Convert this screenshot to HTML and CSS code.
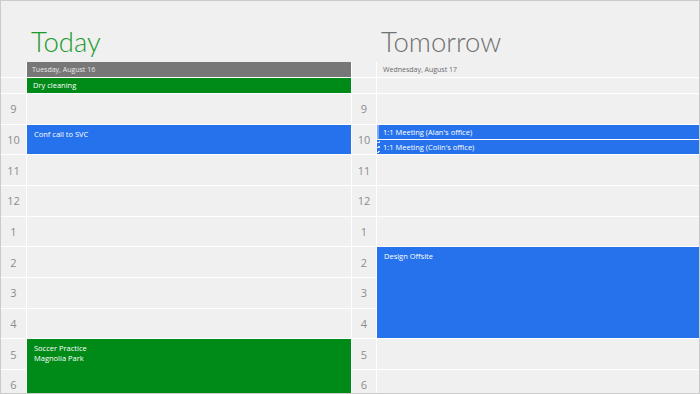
FILE: index.html
```html
<!DOCTYPE html>
<html>
<head>
<title>Calendar - day view</title>
<meta charset="utf-8">
<link rel="stylesheet" href="styles.css">
</head>
<body>
	<div class="screen">
		<div class="heads">
			<h1 class="title today">Today</h1>
			<h1 class="title tomorrow">Tomorrow</h1>
		</div>
		<div class="board">
			<!-- today -->
			<div class="times">
				<div class="slot head"></div>
				<div class="slot allday"></div>
				<div class="slot hour">9</div>
				<div class="slot hour">10</div>
				<div class="slot hour">11</div>
				<div class="slot hour">12</div>
				<div class="slot hour">1</div>
				<div class="slot hour">2</div>
				<div class="slot hour">3</div>
				<div class="slot hour">4</div>
				<div class="slot hour">5</div>
				<div class="slot hour">6</div>
			</div>
			<div class="col wide">
				<div class="slot head date filled">Tuesday, August 16</div>
				<div class="slot allday event green">Dry cleaning</div>
				<div class="slot hour"></div>
				<div class="slot hour event blue">Conf call to SVC</div>
				<div class="slot hour"></div>
				<div class="slot hour"></div>
				<div class="slot hour"></div>
				<div class="slot hour"></div>
				<div class="slot hour"></div>
				<div class="slot hour"></div>
				<div class="slot span2 event green">Soccer Practice<br>Magnolia Park</div>
			</div>
			<!-- tomorrow -->
			<div class="times narrow">
				<div class="slot head"></div>
				<div class="slot allday"></div>
				<div class="slot hour">9</div>
				<div class="slot hour">10</div>
				<div class="slot hour">11</div>
				<div class="slot hour">12</div>
				<div class="slot hour">1</div>
				<div class="slot hour">2</div>
				<div class="slot hour">3</div>
				<div class="slot hour">4</div>
				<div class="slot hour">5</div>
				<div class="slot hour">6</div>
			</div>
			<div class="col">
				<div class="slot head date">Wednesday, August 17</div>
				<div class="slot allday"></div>
				<div class="slot hour"></div>
				<div class="slot hour split">
					<div class="event blue half edge">1:1 Meeting (Alan's office)</div>
					<div class="event blue half hatch">1:1 Meeting (Colin's office)</div>
				</div>
				<div class="slot hour"></div>
				<div class="slot hour"></div>
				<div class="slot hour"></div>
				<div class="slot span3 event blue">Design Offsite</div>
				<div class="slot hour"></div>
				<div class="slot hour"></div>
			</div>
		</div>
	</div>
</body>
</html>
```

FILE: styles.css
```css
body {
	margin: 0;
	font-family: "Open Sans", sans-serif;
}
.screen {
	width: 700px;
	height: 394px;
	box-sizing: border-box;
	border: 1px solid #cbcbcb;
	background-color: #f0f0f0;
	overflow: hidden;
}
.heads {
	display: grid;
	grid-template-columns: 25px 324px 24px 322px;
	column-gap: 1px;
	height: 61px;
	box-sizing: border-box;
	padding-top: 23px;
}
.title {
	margin: 0;
	padding-left: 4px;
	font-family: "Lato", sans-serif;
	font-weight: 300;
	font-size: 27.5px;
	line-height: 36px;
}
.today {
	grid-column: 2;
	color: #199a2a;
}
.tomorrow {
	grid-column: 4;
	color: #707070;
}
.board {
	display: flex;
	gap: 1px;
	background-color: #fff;
	height: 331px;
	overflow: hidden;
}
.times, .col {
	display: flex;
	flex-direction: column;
	gap: 1px;
}
.times { width: 25px; }
.times.narrow { width: 24px; }
.col { width: 322px; }
.col.wide { width: 324px; }
.slot {
	flex: none;
	background-color: #f0f0f0;
	box-sizing: border-box;
}
.head, .allday { height: 15px; }
.hour { height: 29.67px; }
.span2 { height: 60.33px; }
.span3 { height: 91px; }
.times .hour {
	display: flex;
	align-items: center;
	justify-content: center;
	font-size: 11px;
	color: #8c8c8c;
}
.date {
	padding-left: 6px;
	font-size: 7px;
	line-height: 15px;
	color: #6a6a6a;
}
.date.filled {
	padding-left: 5px;
	background-color: #777;
	color: #e8e8e8;
}
.event {
	color: #fff;
	font-size: 7.5px;
	line-height: 10px;
	padding: 4px 7px;
}
.allday.event {
	padding: 0 6px;
	line-height: 15px;
}
.green { background-color: #008a17; }
.blue { background-color: #2672ec; }
.split {
	display: flex;
	flex-direction: column;
	gap: 1px;
	background-color: #fff;
}
.half {
	flex: 1;
	padding: 0 6px;
	display: flex;
	align-items: center;
}
.edge {
	border-left: 2px solid #7ea9f3;
	padding-left: 4px;
}
.hatch {
	padding-left: 3px;
	border-left: 3px solid transparent;
	border-image: repeating-linear-gradient(135deg, #2672ec 0 2px, #cfe0fb 2px 3px) 1;
}
```
